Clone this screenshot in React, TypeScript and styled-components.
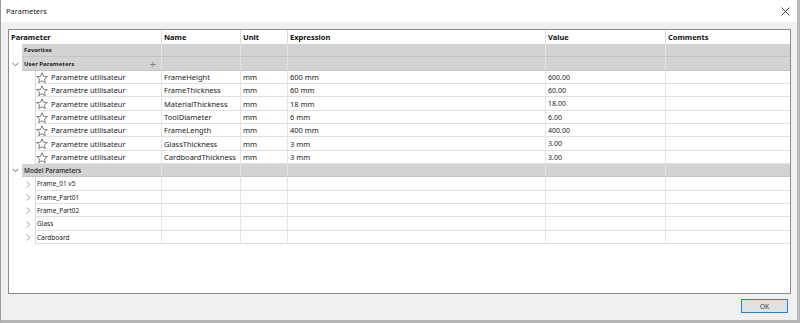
import React from 'react';
import styled, { createGlobalStyle } from 'styled-components';

const GlobalStyle = createGlobalStyle`
  html, body {
    margin: 0;
    padding: 0;
    background: #ffffff;
  }
  body {
    font-family: 'Noto Sans', 'DejaVu Sans', sans-serif;
    color: #1b1b1b;
    -webkit-font-smoothing: antialiased;
  }
`;

const COLS = '79px 47px 258px 120px 1fr';

// rows are 13.33px apart in the original, so alternate 13/14
const rowHeight = (k: number) => Math.round(((k + 1) * 40) / 3) - Math.round((k * 40) / 3);

const Window = styled.div`
  width: 800px;
  height: 323px;
  box-sizing: border-box;
  display: flex;
  flex-direction: column;
  background: #f0f0f0;
  border-left: 1px solid #9a9a9a;
  border-right: 3px solid #b8b8b8;
  border-bottom: 3px solid #b4b4b4;
`;

const TitleBar = styled.div`
  height: 22px;
  flex-shrink: 0;
  display: flex;
  align-items: center;
  justify-content: space-between;
  background: #ffffff;
  padding: 0 7px 0 5px;
  font-size: 7.5px;
  color: #222;
`;

const Body = styled.div`
  flex: 1;
  display: flex;
  flex-direction: column;
  padding: 7px 6px 0 7px;
`;

const TableBox = styled.div`
  height: 265px;
  box-sizing: border-box;
  border: 1px solid #8c8c8c;
  background: #ffffff;
  overflow: hidden;
  opacity: 0.999;
`;

const Row = styled.div<{ indent: number; h: number }>`
  display: grid;
  grid-template-columns: ${({ indent }) => `${indent}px ${152 - indent}px`} ${COLS};
  height: ${({ h }) => h}px;
  box-sizing: border-box;
`;

const HeadCell = styled.div<{ wide?: boolean }>`
  grid-column: ${({ wide }) => (wide ? 'span 2' : 'span 1')};
  display: flex;
  align-items: center;
  padding-left: 2px;
  font-size: 7.5px;
  font-weight: 700;
  color: #111;
  border-left: ${({ wide }) => (wide ? 'none' : '1px solid #dcdcdc')};
`;

const Lead = styled.div<{ end?: boolean }>`
  display: flex;
  align-items: center;
  justify-content: ${({ end }) => (end ? 'flex-end' : 'center')};
  padding-right: ${({ end }) => (end ? '4px' : '0')};
  background: #ffffff;
`;

const GroupCell = styled.div<{ first?: boolean }>`
  display: flex;
  align-items: center;
  justify-content: space-between;
  background: #d3d3d3;
  border-bottom: 1px solid #c4c4c4;
  border-left: ${({ first }) => (first ? 'none' : '1px solid #e2e2e2')};
  padding: 0 5px 0 2px;
  color: #222;
`;

const GroupLabel = styled.span<{ bold?: boolean }>`
  font-weight: ${({ bold }) => (bold ? 700 : 500)};
  font-size: ${({ bold }) => (bold ? '6px' : '6.5px')};
  color: #222;
`;

const Cell = styled.div<{ first?: boolean; muted?: boolean }>`
  display: flex;
  align-items: center;
  gap: 3px;
  font-size: ${({ muted }) => (muted ? '6.5px' : '7.5px')};
  color: #1b1b1b;
  white-space: nowrap;
  border-bottom: 1px solid #e0e0e0;
  border-left: 1px solid ${({ first }) => (first ? '#d8d8d8' : '#e6e6e6')};
  padding-left: ${({ first, muted }) => (muted ? '1px' : first ? '0' : '2px')};
`;

const ValueText = styled.span`
  font-size: 7px;
  color: #1b1b1b;
`;

const Footer = styled.div`
  flex: 1;
  display: flex;
  align-items: center;
  justify-content: flex-end;
  padding: 0 3px 2px 0;
`;

const OkButton = styled.button`
  width: 47px;
  height: 14px;
  box-sizing: border-box;
  border: 1px solid #2a7fd0;
  background: #e1e1e1;
  font-family: inherit;
  font-size: 6.5px;
  color: #333;
  padding: 0;
  box-shadow: inset 0 0 0 1px #e1e1e1;
`;

const PlusSign = styled.span`
  font-size: 11px;
  color: #808080;
  line-height: 1;
  font-weight: 400;
`;

const Star = () => (
  <svg width="12" height="11" viewBox="0 0 24 22" fill="none" stroke="#5a5a5a" strokeWidth="1.6" strokeLinejoin="round">
    <polygon points="12,1.5 15,8.6 22.6,9.2 16.8,14.2 18.6,21.4 12,17.5 5.4,21.4 7.2,14.2 1.4,9.2 9,8.6" />
  </svg>
);

const ChevronDown = () => (
  <svg width="7" height="5" viewBox="0 0 7 5" fill="none" stroke="#6a6a6a" strokeWidth="1">
    <polyline points="0.5,0.8 3.5,3.8 6.5,0.8" />
  </svg>
);

const ChevronRight = () => (
  <svg width="5" height="7" viewBox="0 0 5 7" fill="none" stroke="#9a9a9a" strokeWidth="1">
    <polyline points="0.8,0.5 3.8,3.5 0.8,6.5" />
  </svg>
);

const Close = () => (
  <svg width="9" height="9" viewBox="0 0 9 9" stroke="#333" strokeWidth="0.9">
    <line x1="0.5" y1="0.5" x2="8.5" y2="8.5" />
    <line x1="8.5" y1="0.5" x2="0.5" y2="8.5" />
  </svg>
);

const userParams = [
  ['FrameHeight', '600 mm', '600.00'],
  ['FrameThickness', '60 mm', '60.00'],
  ['MaterialThickness', '18 mm', '18.00'],
  ['ToolDiameter', '6 mm', '6.00'],
  ['FrameLength', '400 mm', '400.00'],
  ['GlassThickness', '3 mm', '3.00'],
  ['CardboardThickness', '3 mm', '3.00'],
];

const models = ['Frame_01 v5', 'Frame_Part01', 'Frame_Part02', 'Glass', 'Cardboard'];

const GroupRow = ({
  label,
  bold,
  chevron,
  plus,
  k,
}: {
  label: string;
  bold?: boolean;
  chevron?: boolean;
  plus?: boolean;
  k: number;
}) => (
  <Row indent={13} h={rowHeight(k)}>
    <Lead>{chevron && <ChevronDown />}</Lead>
    <GroupCell first>
      <GroupLabel bold={bold}>{label}</GroupLabel>
      {plus && <PlusSign>+</PlusSign>}
    </GroupCell>
    {[0, 1, 2, 3, 4].map((i) => (
      <GroupCell key={i} />
    ))}
  </Row>
);

export default function App() {
  const modelStart = 2 + userParams.length;
  return (
    <>
      <GlobalStyle />
      <Window>
        <TitleBar>
          <span>Parameters</span>
          <Close />
        </TitleBar>
        <Body>
          <TableBox>
            <Row indent={0} h={14}>
              <HeadCell wide>Parameter</HeadCell>
              <HeadCell>Name</HeadCell>
              <HeadCell>Unit</HeadCell>
              <HeadCell>Expression</HeadCell>
              <HeadCell>Value</HeadCell>
              <HeadCell>Comments</HeadCell>
            </Row>
            <GroupRow label="Favorites" bold k={0} />
            <GroupRow label="User Parameters" bold chevron plus k={1} />
            {userParams.map(([name, expr, value], i) => (
              <Row indent={26} h={rowHeight(2 + i)} key={name}>
                <Lead />
                <Cell first>
                  <Star />
                  Paramètre utilisateur
                </Cell>
                <Cell>{name}</Cell>
                <Cell>mm</Cell>
                <Cell>{expr}</Cell>
                <Cell>
                  <ValueText>{value}</ValueText>
                </Cell>
                <Cell />
              </Row>
            ))}
            <GroupRow label="Model Parameters" chevron k={modelStart} />
            {models.map((m, i) => (
              <Row indent={26} h={rowHeight(modelStart + 1 + i)} key={m}>
                <Lead end>
                  <ChevronRight />
                </Lead>
                <Cell first muted>
                  {m}
                </Cell>
                <Cell />
                <Cell />
                <Cell />
                <Cell />
                <Cell />
              </Row>
            ))}
          </TableBox>
          <Footer>
            <OkButton>OK</OkButton>
          </Footer>
        </Body>
      </Window>
    </>
  );
}
